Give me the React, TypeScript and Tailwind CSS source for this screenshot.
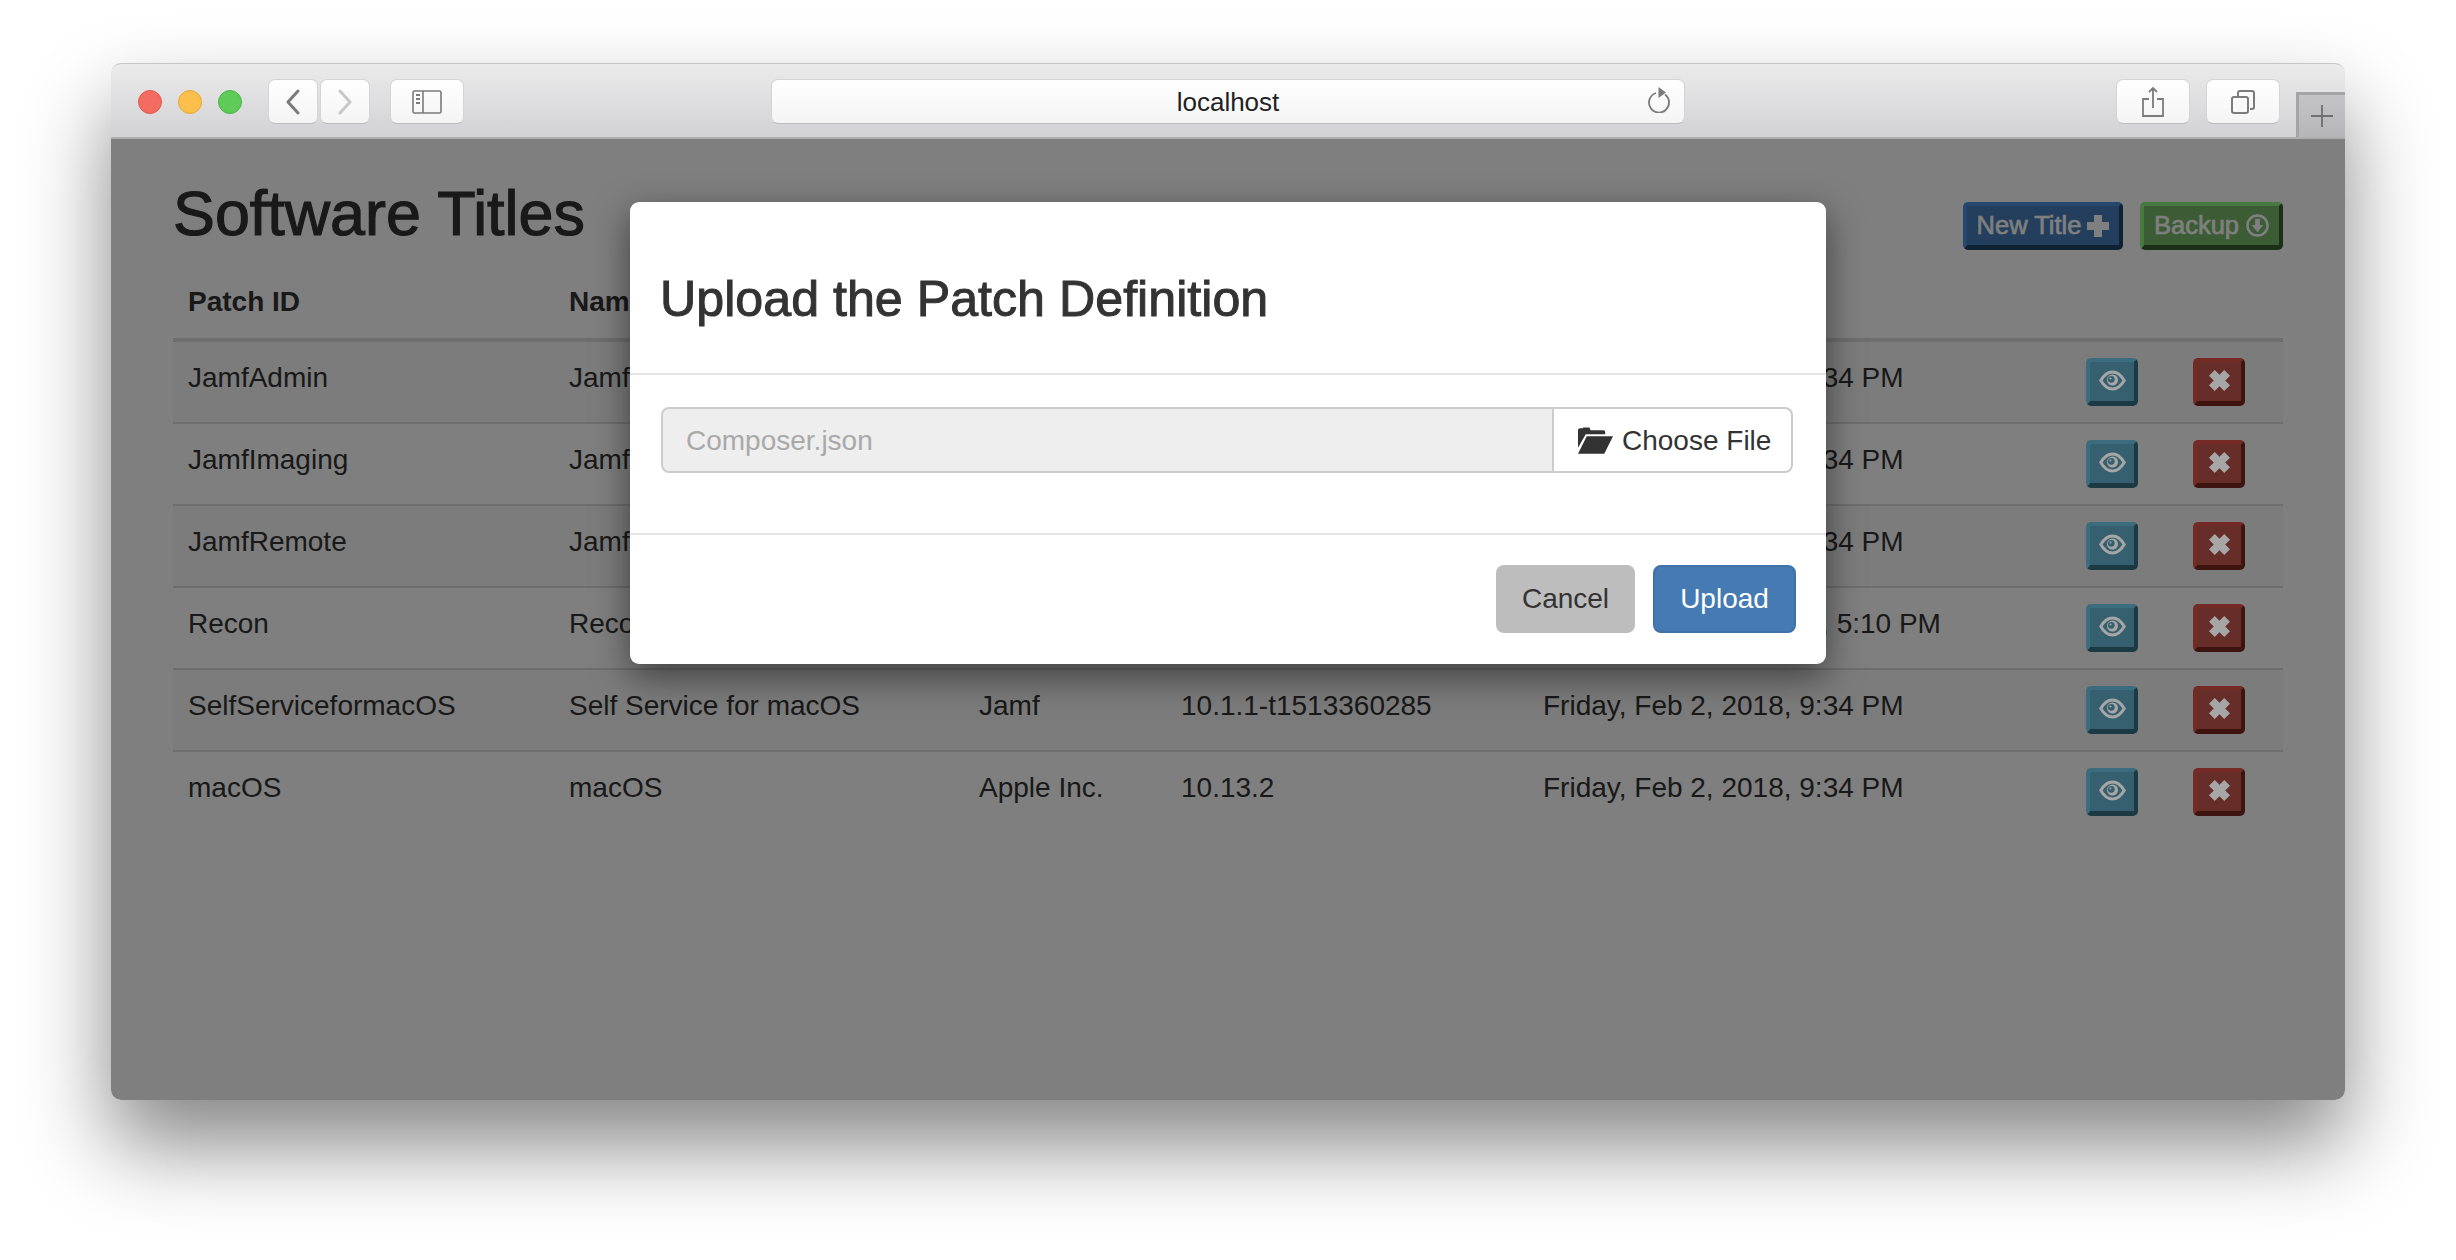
import type { ReactNode } from "react";

const rows = [
  { id: "JamfAdmin", name: "Jamf Admin", publisher: "Jamf", version: "10.1.1-t1513360285", date: "Friday, Feb 2, 2018, 9:34 PM" },
  { id: "JamfImaging", name: "Jamf Imaging", publisher: "Jamf", version: "10.1.1-t1513360285", date: "Friday, Feb 2, 2018, 9:34 PM" },
  { id: "JamfRemote", name: "Jamf Remote", publisher: "Jamf", version: "10.1.1-t1513360285", date: "Friday, Feb 2, 2018, 9:34 PM" },
  { id: "Recon", name: "Recon", publisher: "Jamf", version: "10.1.1-t1513360285", date: "Monday, Feb 12, 2018, 5:10 PM" },
  { id: "SelfServiceformacOS", name: "Self Service for macOS", publisher: "Jamf", version: "10.1.1-t1513360285", date: "Friday, Feb 2, 2018, 9:34 PM" },
  { id: "macOS", name: "macOS", publisher: "Apple Inc.", version: "10.13.2", date: "Friday, Feb 2, 2018, 9:34 PM" },
];

function ToolButton({ className, children }: { className: string; children: ReactNode }) {
  return (
    <div className={`h-[45px] flex items-center justify-center rounded-[7px] border border-[#d4d4d4] border-b-[#bcbcbc] bg-gradient-to-b from-[#ffffff] to-[#f4f4f4] ${className}`}>
      {children}
    </div>
  );
}

function Toolbar() {
  return (
    <div className="relative h-[76px] shrink-0 flex items-center pt-[2px] pl-[27px] rounded-t-[10px] border-t border-[#c6c6c6] border-b-[2px] border-b-[#aeaeae] bg-gradient-to-b from-[#ebebec] to-[#d2d2d4]">
      <div className="w-[24px] h-[24px] rounded-full bg-[#f46b62] border border-[#e2574f]" />
      <div className="w-[24px] h-[24px] ml-[16px] rounded-full bg-[#fbc04b] border border-[#e6a63a]" />
      <div className="w-[24px] h-[24px] ml-[16px] rounded-full bg-[#5ecb58] border border-[#4cb347]" />
      <ToolButton className="w-[50px] ml-[26px]">
        <svg width="18" height="26" viewBox="0 0 18 26" fill="none" stroke="#7b7b7b" strokeWidth="3" strokeLinecap="round" strokeLinejoin="round">
          <path d="M14 2 4 13l10 11" />
        </svg>
      </ToolButton>
      <ToolButton className="w-[50px] ml-[2px]">
        <svg width="18" height="26" viewBox="0 0 18 26" fill="none" stroke="#c8c8c8" strokeWidth="3" strokeLinecap="round" strokeLinejoin="round">
          <path d="M4 2l10 11L4 24" />
        </svg>
      </ToolButton>
      <ToolButton className="w-[74px] ml-[20px]">
        <svg width="30" height="24" viewBox="0 0 30 24" fill="none" stroke="#7b7b7b" strokeWidth="1.6">
          <rect x="1" y="1" width="28" height="22" rx="1.5" />
          <path d="M11 1v22" />
          <path d="M4 5h4M4 9h4M4 13h4" strokeWidth="1.8" />
        </svg>
      </ToolButton>
      <ToolButton className="w-[914px] ml-[307px] relative pt-[1px] text-[26px] text-[#222] font-['Liberation_Sans',sans-serif]">
        localhost
        <svg className="absolute right-[13px] top-[7px]" width="24" height="26" viewBox="0 0 24 26" fill="none" stroke="#7b7b7b" strokeWidth="1.8">
          <path d="M9 6A10 10 0 1 0 18 7.500" />
          <path d="M11.500 0l7.500 5.500-7.500 5.500z" fill="#7b7b7b" stroke="none" />
        </svg>
      </ToolButton>
      <ToolButton className="w-[74px] ml-[431px]">
        <svg width="24" height="32" viewBox="0 0 24 32" fill="none" stroke="#7b7b7b" strokeWidth="1.8">
          <path d="M8 13H2v17h20V13h-6" />
          <path d="M12 22V2M8 6l4-4 4 4" />
        </svg>
      </ToolButton>
      <ToolButton className="w-[74px] ml-[16px]">
        <svg width="24" height="24" viewBox="0 0 24 24" fill="none" stroke="#7b7b7b" strokeWidth="2">
          <rect x="1" y="7" width="16" height="16" rx="2" />
          <path d="M7 6V3a2 2 0 0 1 2-2h12a2 2 0 0 1 2 2v14a2 2 0 0 1-2 2h-2" />
        </svg>
      </ToolButton>
      <div className="absolute right-0 bottom-0 w-[49px] h-[45px] flex items-center justify-center bg-gradient-to-b from-[#c4c4c6] to-[#b6b6b8] border-l-[3px] border-t-[3px] border-[#a4a4a6]">
        <svg width="22" height="22" viewBox="0 0 22 22" stroke="#6f6f6f" strokeWidth="1.8">
          <path d="M11 0v22M0 11h22" />
        </svg>
      </div>
    </div>
  );
}

function PageButton({ className, children }: { className: string; children: ReactNode }) {
  return (
    <div className={`h-[48px] flex items-center justify-center rounded-[5px] border-x-[4px] border-t-[4px] border-b-[5px] ${className}`}>
      {children}
    </div>
  );
}

// the row icons read lighter than the backdrop would leave them, so they sit above it
function EyeIcon() {
  return (
    <svg className="relative z-10 -mt-[3px]" width="27" height="21" viewBox="0 0 27 21">
      <path fill="none" stroke="#a6a6a6" strokeWidth="3" d="M1.800 10.500C5 5 9.500 2 13.500 2s8.500 3 11.700 8.500C22 16 17.500 19 13.500 19S5 16 1.800 10.500z" />
      <circle cx="13.500" cy="10" r="5.500" fill="#a6a6a6" />
      <circle cx="12.300" cy="9.300" r="3.400" fill="#36606f" />
      <circle cx="11.500" cy="8.500" r="1" fill="#a6a6a6" />
    </svg>
  );
}

function CrossIcon() {
  return (
    <svg className="relative z-10 -mt-[3px]" width="21" height="21" viewBox="0 0 22 22">
      <path fill="#a6a6a6" d="M6 0l5 5 5-5 6 6-5 5 5 5-6 6-5-5-5 5-6-6 5-5-5-5z" />
    </svg>
  );
}

function Backdrop() {
  return (
    <div className="absolute inset-0 bg-black/50 rounded-b-[10px] flex justify-center pt-[63px]">
      <div className="w-[1196px] h-[462px] flex flex-col rounded-[9px] bg-white shadow-[0_12px_36px_rgba(0,0,0,0.5)] text-[#333333]">
        <div className="h-[173px] shrink-0 flex items-center pt-[25px] pl-[30px] border-b-[2px] border-[#e5e5e5] text-[50.200px] [-webkit-text-stroke:1px_#333333]">
          Upload the Patch Definition
        </div>
        <div className="h-[160px] shrink-0 pt-[32px] pl-[31px] pr-[33px] border-b-[2px] border-[#e5e5e5]">
          <div className="h-[66px] flex text-[28px]">
            <div className="flex-1 flex items-center pt-[1px] pl-[23px] rounded-l-[8px] border-[2px] border-[#cccccc] bg-[#eeeeee] text-[#a9a9a9]">
              Composer.json
            </div>
            <div className="w-[239px] flex items-center pl-[24px] pt-[1px] rounded-r-[8px] border-[2px] border-l-0 border-[#cccccc]">
              <svg width="35" height="27" viewBox="0 0 36 27" fill="#333333">
                <path d="M0 3a2 2 0 0 1 2-2h3V0h7v1l1 2h13a2 2 0 0 1 2 2v2H8L0 21z" />
                <path d="M9 9h27L27 27H0z" />
              </svg>
              <span className="ml-[9px]">Choose File</span>
            </div>
          </div>
        </div>
        <div className="flex-1 flex items-start justify-end gap-[18px] pt-[30px] pr-[30px] text-[28px]">
          <div className="w-[139px] h-[68px] flex items-center justify-center rounded-[8px] bg-[#bdbdbd]">Cancel</div>
          <div className="w-[143px] h-[68px] flex items-center justify-center rounded-[8px] border-[2px] border-[#3f72a9] bg-[#457ab3] text-white">Upload</div>
        </div>
      </div>
    </div>
  );
}

export default function App() {
  return (
    <div className="h-[1260px] overflow-hidden bg-white pl-[111px] pt-[63px] font-['Liberation_Sans',Arial,sans-serif]">
      <div className="w-[2234px] h-[1037px] flex flex-col rounded-[10px] shadow-[0_45px_85px_rgba(0,0,0,0.48)]">
        <Toolbar />
        <div className="relative flex-1 bg-white rounded-b-[10px] px-[62px] text-[28px] text-[#333333]">
          <div className="h-[143px] flex justify-between">
            <div className="pt-[38px] text-[62.800px] leading-[72px] [-webkit-text-stroke:1.2px_#333333]">Software Titles</div>
            <div className="flex items-start gap-[17px] pt-[63px] text-white">
              <PageButton className="w-[160px] bg-[#487ebc] border-l-[#4e90dc] border-t-[#4e90dc] border-r-[#1c4464] border-b-[#1c4464]">
                <span className="[-webkit-text-stroke:0.6px_#ffffff] text-[25.500px]">New Title</span>
                <svg className="ml-[6px]" width="22" height="22" viewBox="0 0 22 22" fill="#ffffff">
                  <path d="M7 0h8v7h7v8h-7v7H7v-7H0V7h7z" />
                </svg>
              </PageButton>
              <PageButton className="w-[143px] bg-[#76b868] border-l-[#8cf47c] border-t-[#8cf47c] border-r-[#385e30] border-b-[#385e30]">
                <span className="[-webkit-text-stroke:0.6px_#ffffff] text-[25.500px]">Backup</span>
                <svg className="ml-[7px]" width="23" height="23" viewBox="0 0 24 24" fill="none">
                  <circle cx="12" cy="12" r="10.500" stroke="#ffffff" strokeWidth="2.600" />
                  <path fill="#ffffff" d="M9.500 5h5v6.500h3.500L12 19l-6-7.500h3.500z" />
                </svg>
              </PageButton>
            </div>
          </div>
          <div className="h-[60px] flex items-start border-b-[4px] border-[#dddddd] font-bold leading-[40px]">
            <div className="w-[381px] pl-[15px]">Patch ID</div>
            <div className="w-[410px] pl-[15px]">Name</div>
          </div>
          {rows.map((row, i) => (
            <div
              key={row.id}
              className={`flex ${i === 0 ? "h-[80px]" : "h-[82px] border-t-[2px] border-[#dddddd]"} ${i % 2 === 0 ? "bg-[#f9f9f9]" : ""}`}
            >
              <div className="w-[381px] pl-[15px] pt-[16px] leading-[40px]">{row.id}</div>
              <div className="w-[410px] pl-[15px] pt-[16px] leading-[40px]">{row.name}</div>
              <div className="w-[202px] pl-[15px] pt-[16px] leading-[40px]">{row.publisher}</div>
              <div className="w-[362px] pl-[15px] pt-[16px] leading-[40px]">{row.version}</div>
              <div className="w-[558px] pl-[15px] pt-[16px] leading-[40px]">{row.date}</div>
              <div className="pt-[16px]">
                <PageButton className="w-[52px] bg-[#6cc0de] border-l-[#78daff] border-t-[#78daff] border-r-[#387488] border-b-[#387488]">
                  <EyeIcon />
                </PageButton>
              </div>
              <div className="pt-[16px] pl-[55px]">
                <PageButton className="w-[52px] bg-[#cc5a52] border-l-[#e8564c] border-t-[#e8564c] border-r-[#7a2820] border-b-[#7a2820]">
                  <CrossIcon />
                </PageButton>
              </div>
            </div>
          ))}
          <Backdrop />
        </div>
      </div>
    </div>
  );
}
